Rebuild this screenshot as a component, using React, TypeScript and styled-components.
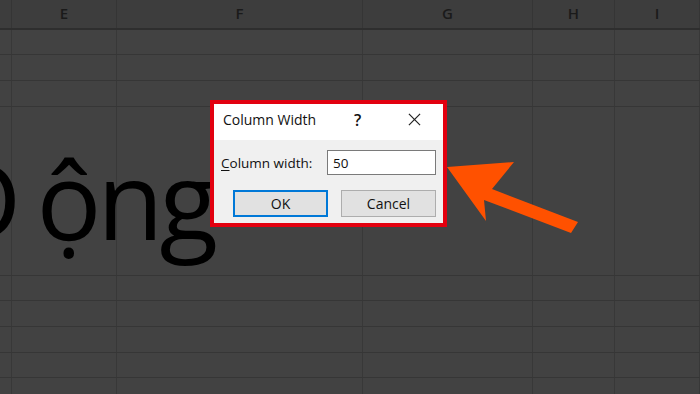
import styled, { createGlobalStyle } from "styled-components";

const columns = [
  { label: "", width: 12 },
  { label: "E", width: 105 },
  { label: "F", width: 246 },
  { label: "G", width: 170 },
  { label: "H", width: 82 },
  { label: "I", width: 85 },
];

const rowHeights = [25, 26, 26, 169, 25, 26, 26, 25, 26];
const template = columns.map((c) => `${c.width}px`).join(" ");

export default function App() {
  return (
    <>
      <GlobalStyle />
      <Screen>
        <Sheet>
          <HeaderRow>
            {columns.map((c, i) => (
              <HeaderCell key={i}>{c.label}</HeaderCell>
            ))}
          </HeaderRow>
          {rowHeights.map((h, r) => (
            <Row key={r} $height={h}>
              {columns.map((_, i) => (
                <Cell key={i} />
              ))}
              {r === 3 && (
                <BigText>
                  <FirstLetter>Đ</FirstLetter>ộng
                </BigText>
              )}
            </Row>
          ))}
        </Sheet>

        <Dialog>
          <TitleBar>
            <Title>Column Width</Title>
            <Help>?</Help>
            <CloseIcon viewBox="0 0 14 14">
              <path d="M1 1 L13 13 M13 1 L1 13" />
            </CloseIcon>
          </TitleBar>
          <Body>
            <FieldRow>
              <Label>
                <u>C</u>olumn width:
              </Label>
              <Input defaultValue="50" />
            </FieldRow>
            <ButtonRow>
              <DialogButton $primary>OK</DialogButton>
              <DialogButton>Cancel</DialogButton>
            </ButtonRow>
          </Body>
        </Dialog>

        <Arrow viewBox="0 0 700 394">
          <polygon points="447,167 514,162 492,189 578,222 571,233 484,200 486,221" />
        </Arrow>
      </Screen>
    </>
  );
}

const GlobalStyle = createGlobalStyle`
  html, body {
    margin: 0;
    padding: 0;
    background: #424242;
    overflow: hidden;
  }
  * { box-sizing: border-box; }
`;

const Screen = styled.div`
  position: relative;
  width: 700px;
  height: 394px;
  overflow: hidden;
  font-family: "Open Sans", "Noto Sans", sans-serif;
`;

const Sheet = styled.div`
  display: flex;
  flex-direction: column;
  background: #424242;
`;

const HeaderRow = styled.div`
  display: grid;
  grid-template-columns: ${template};
  height: 30px;
  background: #3d3d3d;
  border-bottom: 2px solid #2e2e2e;
`;

const HeaderCell = styled.div`
  display: flex;
  align-items: center;
  justify-content: center;
  border-right: 1px solid #353535;
  color: #1a1a1a;
  font-size: 15px;
  font-weight: 600;
  padding-bottom: 2px;
`;

const Row = styled.div<{ $height: number }>`
  position: relative;
  display: grid;
  grid-template-columns: ${template};
  height: ${(p) => p.$height}px;
  border-bottom: 1px solid #363636;
  flex-shrink: 0;
`;

const Cell = styled.div`
  border-right: 1px solid #383838;
`;

const BigText = styled.div`
  position: absolute;
  left: -57px;
  top: 38px;
  font-family: "Open Sans", sans-serif;
  font-size: 108px;
  line-height: 1;
  letter-spacing: -4px;
  color: #000;
  white-space: nowrap;
`;

const FirstLetter = styled.span`
  letter-spacing: 15px;
`;

const Dialog = styled.div`
  position: absolute;
  left: 210px;
  top: 100px;
  width: 237px;
  height: 127px;
  border: 4px solid #e2000f;
  display: flex;
  flex-direction: column;
  background: #f0f0f0;
`;

const TitleBar = styled.div`
  display: flex;
  align-items: center;
  height: 36px;
  background: #fff;
  padding: 0 0 5px 9px;
`;

const Title = styled.div`
  font-size: 14px;
  color: #111;
  flex: 1;
`;

const Help = styled.div`
  font-size: 16px;
  font-weight: 600;
  color: #111;
  width: 20px;
  margin-right: 34px;
`;

const CloseIcon = styled.svg`
  width: 13px;
  height: 13px;
  margin-right: 22px;
  stroke: #222;
  stroke-width: 1.3;
  fill: none;
`;

const Body = styled.div`
  flex: 1;
  display: flex;
  flex-direction: column;
  padding: 10px 7px 0 7px;
  gap: 15px;
`;

const FieldRow = styled.div`
  display: flex;
  align-items: center;
  justify-content: space-between;
`;

const Label = styled.label`
  font-size: 13.5px;
  color: #111;
  u {
    text-underline-offset: 2px;
  }
`;

const Input = styled.input`
  width: 109px;
  height: 25px;
  border: 1px solid #7a7a7a;
  background: #fff;
  font-family: "Open Sans", sans-serif;
  font-size: 13.5px;
  color: #111;
  padding: 0 5px;
  outline: none;
`;

const ButtonRow = styled.div`
  display: flex;
  justify-content: space-between;
  padding-left: 12px;
`;

const DialogButton = styled.button<{ $primary?: boolean }>`
  width: 95px;
  height: 27px;
  background: #e1e1e1;
  border: ${(p) => (p.$primary ? "2px solid #0078d7" : "1px solid #adadad")};
  font-family: "Open Sans", sans-serif;
  font-size: 14px;
  color: #111;
  padding: 0;
`;

const Arrow = styled.svg`
  position: absolute;
  inset: 0;
  width: 700px;
  height: 394px;
  pointer-events: none;
  fill: #ff5100;
`;
